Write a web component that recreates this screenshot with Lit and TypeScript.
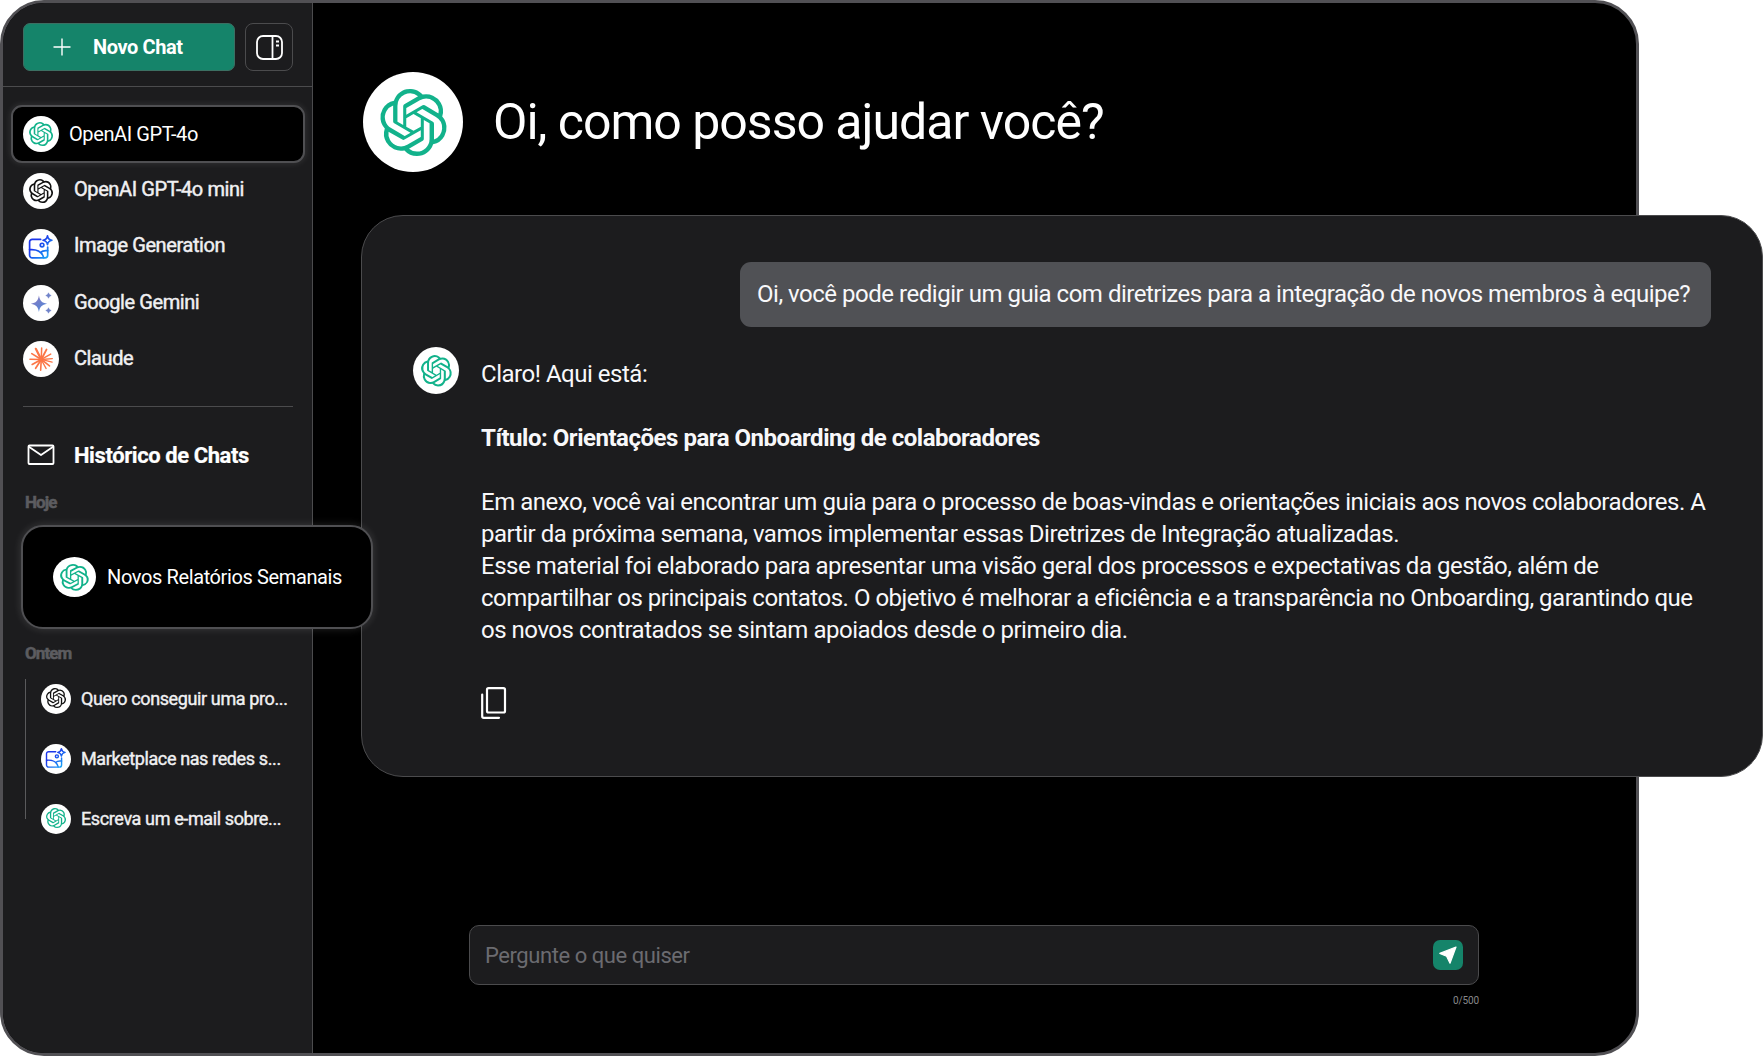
import { LitElement, html, css, svg } from "lit";
import { customElement, property } from "lit/decorators.js";

const KNOT =
  "M22.2819 9.8211a5.9847 5.9847 0 0 0-.5157-4.9108 6.0462 6.0462 0 0 0-6.5098-2.9A6.0651 6.0651 0 0 0 4.9807 4.1818a5.9847 5.9847 0 0 0-3.9977 2.9 6.0462 6.0462 0 0 0 .7427 7.0966 5.98 5.98 0 0 0 .511 4.9107 6.051 6.051 0 0 0 6.5146 2.9001A5.9847 5.9847 0 0 0 13.2599 24a6.0557 6.0557 0 0 0 5.7718-4.2058 5.9894 5.9894 0 0 0 3.9977-2.9001 6.0557 6.0557 0 0 0-.7475-7.0729zm-9.022 12.6081a4.4755 4.4755 0 0 1-2.8764-1.0408l.1419-.0804 4.7783-2.7582a.7948.7948 0 0 0 .3927-.6813v-6.7369l2.02 1.1686a.071.071 0 0 1 .038.052v5.5826a4.504 4.504 0 0 1-4.4945 4.4944zm-9.6607-4.1254a4.4708 4.4708 0 0 1-.5346-3.0137l.142.0852 4.783 2.7582a.7712.7712 0 0 0 .7806 0l5.8428-3.3685v2.3324a.0804.0804 0 0 1-.0332.0615L9.74 19.9502a4.4992 4.4992 0 0 1-6.1408-1.6464zM2.3408 7.8956a4.485 4.485 0 0 1 2.3655-1.9728V11.6a.7664.7664 0 0 0 .3879.6765l5.8144 3.3543-2.0201 1.1685a.0757.0757 0 0 1-.071 0l-4.8303-2.7865A4.504 4.504 0 0 1 2.3408 7.872zm16.5963 3.8558L13.1038 8.364 15.1192 7.2a.0757.0757 0 0 1 .071 0l4.8303 2.7913a4.4944 4.4944 0 0 1-.6765 8.1042v-5.6772a.79.79 0 0 0-.407-.667zm2.0107-3.0231l-.142-.0852-4.7735-2.7818a.7759.7759 0 0 0-.7854 0L9.409 9.2297V6.8974a.0662.0662 0 0 1 .0284-.0615l4.8303-2.7866a4.4992 4.4992 0 0 1 6.6802 4.66zM8.3065 12.863l-2.02-1.1638a.0804.0804 0 0 1-.038-.0567V6.0742a4.4992 4.4992 0 0 1 7.3757-3.4537l-.142.0805L8.704 5.459a.7948.7948 0 0 0-.3927.6813zm1.0976-2.3654l2.602-1.4998 2.6069 1.4998v2.9994l-2.5974 1.4997-2.6067-1.4997Z";

// end x, end y, stroke width
const RAYS = [
  [12.6, 1, 1.5], [17.4, 2.6, 1.9], [21.6, 7, 1.5], [23.2, 11.6, 1.4], [23, 15, 1.3],
  [20.4, 18.8, 1.6], [17, 21.4, 1.4], [11.6, 23.2, 1.6], [6.6, 21.2, 1.7], [3.2, 17.4, 1.7],
  [0.9, 12.2, 1.4], [2.8, 6.6, 1.7], [6.8, 1.8, 2.2],
];

@customElement("model-avatar")
export class ModelAvatar extends LitElement {
  @property() kind = "green";

  static styles = css`
    :host {
      display: flex;
      align-items: center;
      justify-content: center;
      flex: none;
      border-radius: 50%;
      background: #fff;
    }

    svg {
      width: 67%;
      height: 67%;
      overflow: visible;
    }
  `;

  private art() {
    switch (this.kind) {
      case "image":
        return svg`
          <defs>
            <linearGradient id="g" x1="0" y1="0" x2="24" y2="24" gradientUnits="userSpaceOnUse">
              <stop offset="0.35" stop-color="#1c36ea" />
              <stop offset="1" stop-color="#17c3fa" />
            </linearGradient>
          </defs>
          <g fill="none" stroke="url(#g)" stroke-width="1.7" stroke-linecap="round" stroke-linejoin="round">
            <path d="M11.6 4.4H3.2A2.6 2.6 0 0 0 .6 7V20.2a2.6 2.6 0 0 0 2.6 2.6H16a2.6 2.6 0 0 0 2.6-2.6V12" />
            <path d="M.6 14.6C7 14 13 16.4 14.6 22.6M11.4 17.4C13.4 15.6 16 15.2 18.6 15.6" />
            <circle cx="13" cy="10" r="1.8" />
            <path d="M18.4 .8C18.8 3.6 19.8 4.7 22.8 5.2C19.8 5.7 18.8 6.8 18.4 9.6C18 6.8 17 5.7 14 5.2C17 4.7 18 3.6 18.4 .8Z" />
          </g>`;
      case "gemini":
        return svg`
          <defs>
            <linearGradient id="g" x1="4" y1="4" x2="16" y2="22" gradientUnits="userSpaceOnUse">
              <stop offset="0" stop-color="#8d7bc0" />
              <stop offset="0.6" stop-color="#6482d0" />
              <stop offset="1" stop-color="#4f9be8" />
            </linearGradient>
          </defs>
          <path fill="url(#g)" d="M9.9 4.4C11 10 12.6 11.6 18 12.6C12.6 13.7 11 15.4 9.9 20.8C8.8 15.4 7.2 13.7 1.9 12.6C7.2 11.6 8.8 10 9.9 4.4Z" />
          <path fill="#6f82c9" stroke="#6f82c9" stroke-width=".5" d="M19.4 1.8Q19.9 4 22.1 4.5Q19.9 5 19.4 7.2Q18.9 5 16.7 4.5Q18.9 4 19.4 1.8ZM19.4 16.7Q19.9 18.9 22.1 19.4Q19.9 19.9 19.4 22.1Q18.9 19.9 16.7 19.4Q18.9 18.9 19.4 16.7Z" />`;
      case "claude":
        return svg`<g stroke="#fc7647" stroke-linecap="round">
          ${RAYS.map(([x, y, w]) => svg`<path d="M12.2 12.4L${x} ${y}" stroke-width=${w} />`)}
        </g>`;
      default:
        return svg`<path fill=${this.kind === "black" ? "#111" : "#12b28b"} d=${KNOT} />`;
    }
  }

  render() {
    return html`<svg viewBox="0 0 24 24" preserveAspectRatio="none">${this.art()}</svg>`;
  }
}

const MODELS = [
  { kind: "black", name: "OpenAI GPT-4o mini" },
  { kind: "image", name: "Image Generation" },
  { kind: "gemini", name: "Google Gemini" },
  { kind: "claude", name: "Claude" },
];

const YESTERDAY = [
  { kind: "black", name: "Quero conseguir uma pro..." },
  { kind: "image", name: "Marketplace nas redes s..." },
  { kind: "green", name: "Escreva um e-mail sobre..." },
];

@customElement("chat-sidebar")
export class ChatSidebar extends LitElement {
  static styles = css`
    :host {
      display: flex;
      flex-direction: column;
      flex: none;
      box-sizing: border-box;
      width: 310px;
      background: #1c1c1e;
      border-right: 1px solid #4b4b4d;
      color: #f0f0f2;
    }

    .top {
      display: flex;
      gap: 10px;
      height: 84px;
      box-sizing: border-box;
      padding: 20px 16px 0 20px;
      border-bottom: 1px solid #4b4b4d;
    }

    .new {
      display: flex;
      align-items: center;
      box-sizing: border-box;
      width: 212px;
      height: 48px;
      padding-left: 29px;
      gap: 22px;
      background: #15846a;
      border: 1px solid #3c6f62;
      border-radius: 7px;
      color: #fff;
      font-size: 20px;
      font-weight: 700;
      letter-spacing: -0.4px;
    }

    .toggle {
      display: flex;
      align-items: center;
      justify-content: center;
      box-sizing: border-box;
      width: 48px;
      height: 48px;
      border: 1px solid #4b4b4d;
      border-radius: 8px;
    }

    .selected {
      display: flex;
      align-items: center;
      box-sizing: border-box;
      height: 58px;
      margin: 18px 7px 0 8px;
      padding-left: 10px;
      gap: 10px;
      background: #000;
      border: 2px solid #4f4f52;
      border-radius: 11px;
      box-shadow: 0 0 7px rgba(255, 255, 255, 0.12);
      color: #fff;
      font-size: 20px;
      letter-spacing: -0.4px;
    }

    .models {
      display: flex;
      flex-direction: column;
      gap: 20px;
      margin: 10px 19px 0 20px;
      padding-bottom: 29px;
      border-bottom: 1px solid #4b4b4d;
    }

    .model {
      display: flex;
      align-items: center;
      gap: 15px;
      height: 36px;
      font-size: 20px;
      letter-spacing: -0.41px;
    }

    .model span {
      padding-bottom: 4px;
      -webkit-text-stroke: 0.45px;
    }

    .model:nth-child(n + 3) span {
      padding-bottom: 2px;
    }

    .medium {
      width: 36px;
      height: 36px;
    }

    .history {
      display: flex;
      align-items: center;
      height: 30px;
      margin: 33px 0 0 24px;
      gap: 19px;
      color: #fff;
      font-size: 22px;
      font-weight: 700;
      letter-spacing: -0.42px;
      -webkit-text-stroke: 0.2px;
    }

    .day {
      height: 20px;
      line-height: 21px;
      margin: 22px 0 0 22px;
      color: #5c5c60;
      font-size: 17px;
      font-weight: 700;
      letter-spacing: -0.9px;
      -webkit-text-stroke: 0.5px;
    }

    .current {
      position: relative;
      display: flex;
      align-items: center;
      box-sizing: border-box;
      width: 352px;
      height: 104px;
      margin: 13px 0 0 18px;
      padding-left: 30px;
      gap: 11px;
      background: #000;
      border: 2px solid #4f4f52;
      border-radius: 22px;
      box-shadow: 0 0 9px rgba(255, 255, 255, 0.14);
      color: #fff;
      font-size: 20px;
      letter-spacing: -0.38px;
      white-space: nowrap;
    }

    .wide {
      width: 43px;
      height: 40px;
    }

    .day.old {
      margin-top: 14px;
    }

    .items {
      display: flex;
      flex-direction: column;
      gap: 31px;
      height: 135px;
      margin: 16px 0 0 22px;
      padding: 5px 0 0 15px;
      border-left: 1px solid #5a5a5c;
    }

    .item {
      display: flex;
      align-items: center;
      flex: none;
      height: 29px;
      gap: 10px;
      font-size: 18px;
      letter-spacing: -0.38px;
      white-space: nowrap;
      -webkit-text-stroke: 0.4px;
    }

    .small {
      width: 30px;
      height: 30px;
    }
  `;

  render() {
    return html`
      <div class="top">
        <div class="new">
          <svg width="18" height="18" viewBox="0 0 18 18" stroke="#fff" stroke-width="1.4"><path d="M9 .5v17M.5 9h17" /></svg>
          <span>Novo Chat</span>
        </div>
        <div class="toggle">
          <svg width="27" height="25" viewBox="0 0 27 25" fill="none" stroke="#fff" stroke-width="1.8">
            <rect x="1" y="1" width="25" height="23" rx="6" />
            <path d="M16.5 1v23M20 6.5h3M20 10.5h3" />
          </svg>
        </div>
      </div>
      <div class="selected"><model-avatar class="medium"></model-avatar><span>OpenAI GPT-4o</span></div>
      <div class="models">
        ${MODELS.map(
          (m) => html`<div class="model"><model-avatar class="medium" kind=${m.kind}></model-avatar><span>${m.name}</span></div>`
        )}
      </div>
      <div class="history">
        <svg width="28" height="22" viewBox="0 0 28 22" fill="none" stroke="#fff" stroke-width="1.8" stroke-linejoin="round">
          <rect x="1.5" y="1.5" width="25" height="18.5" rx="1" />
          <path d="M1.5 2.5L14 11L26.5 2.5" />
        </svg>
        <span>Histórico de Chats</span>
      </div>
      <div class="day">Hoje</div>
      <div class="current"><model-avatar class="wide"></model-avatar><span>Novos Relatórios Semanais</span></div>
      <div class="day old">Ontem</div>
      <div class="items">
        ${YESTERDAY.map(
          (m) => html`<div class="item"><model-avatar class="small" kind=${m.kind}></model-avatar><span>${m.name}</span></div>`
        )}
      </div>
    `;
  }
}

@customElement("app-root")
export class AppRoot extends LitElement {
  static styles = css`
    :host {
      display: block;
      width: 1763px;
      height: 1056px;
      overflow: hidden;
      background: #fff;
      font-family: Roboto, sans-serif;
    }

    .window {
      display: flex;
      box-sizing: border-box;
      width: 1639px;
      height: 1056px;
      background: #000;
      border: 3px solid #515054;
      border-radius: 44px;
    }

    chat-sidebar {
      position: relative;
      z-index: 1;
      border-radius: 41px 0 0 41px;
    }

    main {
      flex: 1;
      min-width: 0;
      color: #fff;
    }

    .greeting {
      display: flex;
      align-items: center;
      gap: 30px;
      height: 100px;
      margin: 69px 0 0 50px;
      font-size: 50px;
      letter-spacing: -1px;
    }

    .large {
      width: 100px;
      height: 100px;
    }

    .panel {
      display: flex;
      flex-direction: column;
      box-sizing: border-box;
      width: 1402px;
      height: 562px;
      margin: 43px 0 0 48px;
      padding: 46px 51px 0;
      background: #1c1c1e;
      border: 1px solid #4b4b4d;
      border-radius: 42px;
      font-size: 24px;
      line-height: 32px;
      letter-spacing: -0.48px;
      color: #f8f8fa;
    }

    .bubble {
      display: flex;
      align-items: center;
      align-self: flex-end;
      box-sizing: border-box;
      width: 971px;
      height: 65px;
      padding: 0 0 2px 17px;
      background: #505155;
      border-radius: 11px;
      white-space: nowrap;
    }

    .answer {
      display: flex;
      gap: 22px;
      margin-top: 20px;
    }

    .reply {
      width: 46px;
      height: 47px;
    }

    .text {
      padding-top: 11px;
      white-space: nowrap;
    }

    p {
      margin: 0 0 32px;
    }

    .copy {
      display: block;
      margin-top: 41px;
    }

    .ask {
      width: 1010px;
      margin: 148px 0 0 156px;
    }

    .field {
      display: flex;
      align-items: center;
      justify-content: space-between;
      box-sizing: border-box;
      height: 60px;
      padding: 0 15px;
      background: #1c1c1e;
      border: 1px solid #4b4b4d;
      border-radius: 10px;
      color: #6b6b70;
      font-size: 22px;
      letter-spacing: -0.44px;
    }

    .send {
      display: flex;
      align-items: center;
      justify-content: center;
      width: 30px;
      height: 30px;
      background: #15846a;
      border-radius: 7px;
    }

    .count {
      margin-top: 9px;
      color: #88888a;
      font-size: 10px;
      line-height: 13px;
      letter-spacing: -0.1px;
      text-align: right;
    }
  `;

  render() {
    return html`
      <div class="window">
        <chat-sidebar></chat-sidebar>
        <main>
          <div class="greeting"><model-avatar class="large"></model-avatar><span>Oi, como posso ajudar você?</span></div>
          <section class="panel">
            <div class="bubble"><span>Oi, você pode redigir um guia com diretrizes para a integração de novos membros à equipe?</span></div>
            <div class="answer">
              <model-avatar class="reply"></model-avatar>
              <div class="text">
                <p>Claro! Aqui está:</p>
                <p><b>Título: Orientações para Onboarding de colaboradores</b></p>
                <p>
                  Em anexo, você vai encontrar um guia para o processo de boas-vindas e orientações iniciais aos novos colaboradores. A<br />
                  partir da próxima semana, vamos implementar essas Diretrizes de Integração atualizadas.<br />
                  Esse material foi elaborado para apresentar uma visão geral dos processos e expectativas da gestão, além de<br />
                  compartilhar os principais contatos. O objetivo é melhorar a eficiência e a transparência no Onboarding, garantindo que<br />
                  os novos contratados se sintam apoiados desde o primeiro dia.
                </p>
                <svg class="copy" width="26" height="32" viewBox="0 0 26 32" fill="none" stroke="#fff" stroke-width="2.2" stroke-linecap="round" stroke-linejoin="round">
                  <rect x="6" y="1.2" width="18" height="24.3" rx="1.5" />
                  <path d="M1.2 7.5V29.3a1.5 1.5 0 0 0 1.5 1.5H18" />
                </svg>
              </div>
            </div>
          </section>
          <div class="ask">
            <div class="field">
              <span>Pergunte o que quiser</span>
              <div class="send">
                <svg width="18" height="18" viewBox="0 0 18 18" fill="#fff" stroke="#fff" stroke-width="1.2" stroke-linejoin="round">
                  <path d="M17 1L.8 7.4L7.6 10.2L11 17.2Z" />
                </svg>
              </div>
            </div>
            <div class="count">0/500</div>
          </div>
        </main>
      </div>
    `;
  }
}

declare global {
  interface HTMLElementTagNameMap {
    "app-root": AppRoot;
    "chat-sidebar": ChatSidebar;
    "model-avatar": ModelAvatar;
  }
}
